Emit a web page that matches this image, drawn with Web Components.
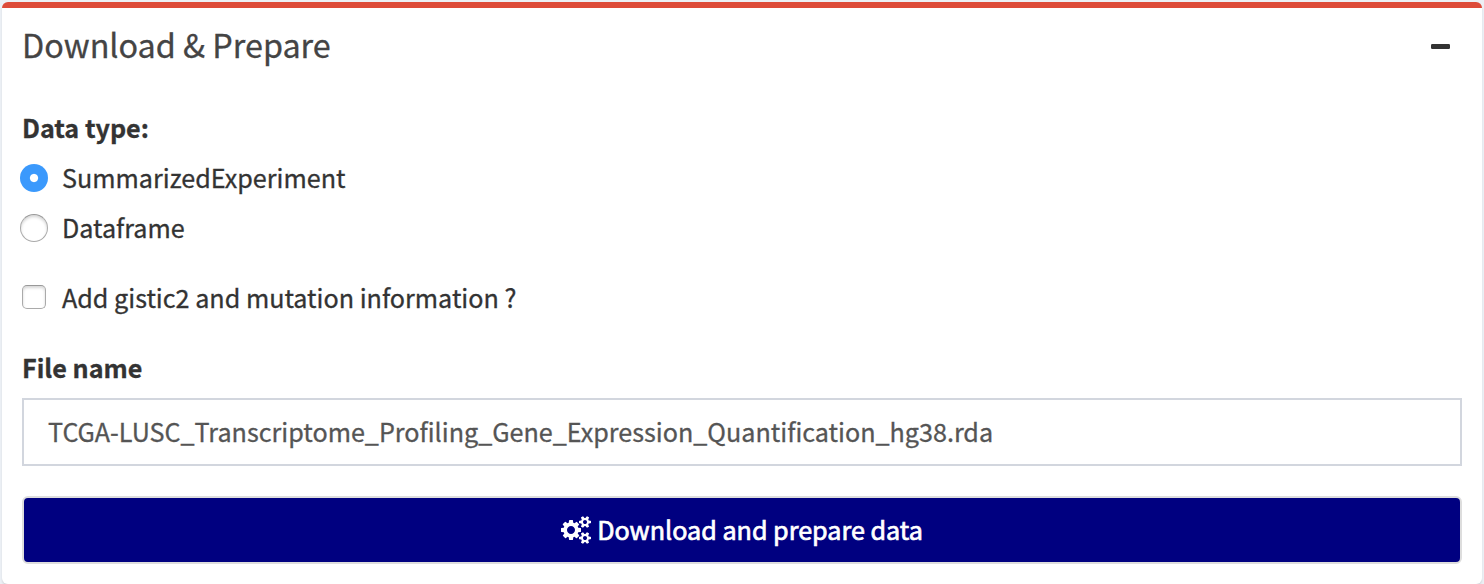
<!DOCTYPE html>
<html lang="en">
<head>
<meta charset="utf-8">
<title>Download &amp; Prepare</title>
<style>
body{margin:0;height:584px;overflow:hidden;background:#ecf0f5;color:#333;font:25.15px/40px "Noto Sans CJK SC","Noto Sans",sans-serif;-webkit-text-stroke:.3px currentColor}
</style>
</head>
<body>
<panel-box>
  <span slot="title">Download &amp; Prepare</span>
  <field-label>Data type:</field-label>
  <choice-item kind="radio" checked>SummarizedExperiment</choice-item>
  <choice-item kind="radio">Dataframe</choice-item>
  <choice-item kind="checkbox" style="margin-top:30px">Add gistic2 and mutation information ?</choice-item>
  <field-label style="margin-top:30px">File name</field-label>
  <text-field>TCGA-LUSC_Transcriptome_Profiling_Gene_Expression_Quantification_hg38.rda</text-field>
  <action-button>Download and prepare data</action-button>
</panel-box>
<script>
const define = (name, html) => customElements.define(name, class extends HTMLElement {
  constructor() {
    super();
    this.attachShadow({ mode: 'open' }).innerHTML = html;
  }
});

define('panel-box', `
<style>
:host{display:block;box-sizing:border-box;height:584px;padding:2px 2px 0}
section{box-sizing:border-box;height:582px;background:#fff;border-top:6px solid #dd4b39;border-radius:6px;box-shadow:0 2px 2px rgba(0,0,0,.1);padding:18px 20px 0}
header{display:flex;justify-content:space-between;height:36px;margin-bottom:45px}
h3{margin:0;font-size:32.35px;font-weight:400;line-height:36px;color:#444}
svg{width:19px;height:5px;margin:18px 12px 0 0;fill:#333}
</style>
<section>
  <header><h3><slot name="title"></slot></h3><svg viewBox="0 0 19 5"><rect width="19" height="5" rx="1.2"/></svg></header>
  <slot></slot>
</section>`);

define('field-label', `
<style>:host{display:block;height:40px;font-weight:700}</style><slot></slot>`);

define('choice-item', `
<style>
:host{display:flex;height:40px;margin-top:10px}
i{box-sizing:border-box;flex:none;border:1px solid #aaa;border-top-color:#999;background:#fff;box-shadow:inset 0 2px 3px rgba(0,0,0,.16)}
:host([kind=radio]) i{width:28px;height:28px;margin:7px 14px 0 -2px;border-radius:50%}
:host([kind=checkbox]) i{width:24px;height:24px;margin:8px 16px 0 0;border-radius:5px}
:host([checked]) i{border:0;background:radial-gradient(circle,#fff 3.6px,#3b99fc 4.6px);box-shadow:none}
</style><i></i><span><slot></slot></span>`);

define('text-field', `
<style>
:host{display:block;box-sizing:border-box;height:68px;margin-top:11px;border:2px solid #d2d6de;padding:0 24px;line-height:62px;color:#555;white-space:nowrap}
</style><slot></slot>`);

define('action-button', `
<style>
:host{display:flex;box-sizing:border-box;height:68px;margin-top:30px;border:2px solid #ddd;border-radius:6px;background:#000080;color:#fff;justify-content:center;align-items:center;-webkit-text-stroke-width:.7px}
svg{width:30px;height:28px;margin-right:6px;fill:#fff}
span{margin-bottom:2px}
path{stroke:none}
</style>
<svg viewBox="0 0 1920 1792"><path d="M896 896q0-106-75-181t-181-75-181 75-75 181 75 181 181 75 181-75 75-181zm768 512q0-52-38-90t-90-38-90 38-38 90q0 53 37.5 90.5t90.5 37.5 90.5-37.5 37.5-90.5zm0-1024q0-52-38-90t-90-38-90 38-38 90q0 53 37.5 90.5t90.5 37.5 90.5-37.5 37.5-90.5zm-384 421v185q0 10-7 19.5t-16 10.5l-155 24q-11 35-32 76 34 48 90 115 7 11 7 20 0 12-7 19-23 30-82.5 89.5t-78.5 59.5q-11 0-21-7l-115-90q-37 19-77 31-11 108-23 155-7 24-30 24h-186q-11 0-20-7.5t-10-17.5l-23-153q-34-10-75-31l-118 89q-7 7-20 7-11 0-21-8-144-133-144-160 0-9 7-19 10-14 41-53t47-61q-23-44-35-82l-152-24q-10-1-17-9.5t-7-19.5v-185q0-10 7-19.5t16-10.5l155-24q11-35 32-76-34-48-90-115-7-11-7-20 0-12 7-20 22-30 82-89t79-59q11 0 21 7l115 90q34-18 77-32 11-108 23-154 7-24 30-24h186q11 0 20 7.5t10 17.5l23 153q34 10 75 31l118-89q8-7 20-7 11 0 21 8 144 133 144 160 0 8-7 19-12 16-42 54t-45 60q23 48 34 82l152 23q10 2 17 10.5t7 19.5zm640 533v140q0 16-149 31-12 27-30 52 51 113 51 138 0 4-4 7-122 71-124 71-8 0-46-47t-52-68q-20 2-30 2t-30-2q-14 21-52 68t-46 47q-2 0-124-71-4-3-4-7 0-25 51-138-18-25-30-52-149-15-149-31v-140q0-16 149-31 13-29 30-52-51-113-51-138 0-4 4-7 4-2 35-20t59-34 30-16q8 0 46 46.5t52 67.5q20-2 30-2t30 2q51-71 92-112l6-2q4 0 124 70 4 3 4 7 0 25-51 138 17 23 30 52 149 15 149 31zm0-1024v140q0 16-149 31-12 27-30 52 51 113 51 138 0 4-4 7-122 71-124 71-8 0-46-47t-52-68q-20 2-30 2t-30-2q-14 21-52 68t-46 47q-2 0-124-71-4-3-4-7 0-25 51-138-18-25-30-52-149-15-149-31v-140q0-16 149-31 13-29 30-52-51-113-51-138 0-4 4-7 4-2 35-20t59-34 30-16q8 0 46 46.5t52 67.5q20-2 30-2t30 2q51-71 92-112l6-2q4 0 124 70 4 3 4 7 0 25-51 138 17 23 30 52 149 15 149 31z"/></svg><span><slot></slot></span>`);
</script>
</body>
</html>
